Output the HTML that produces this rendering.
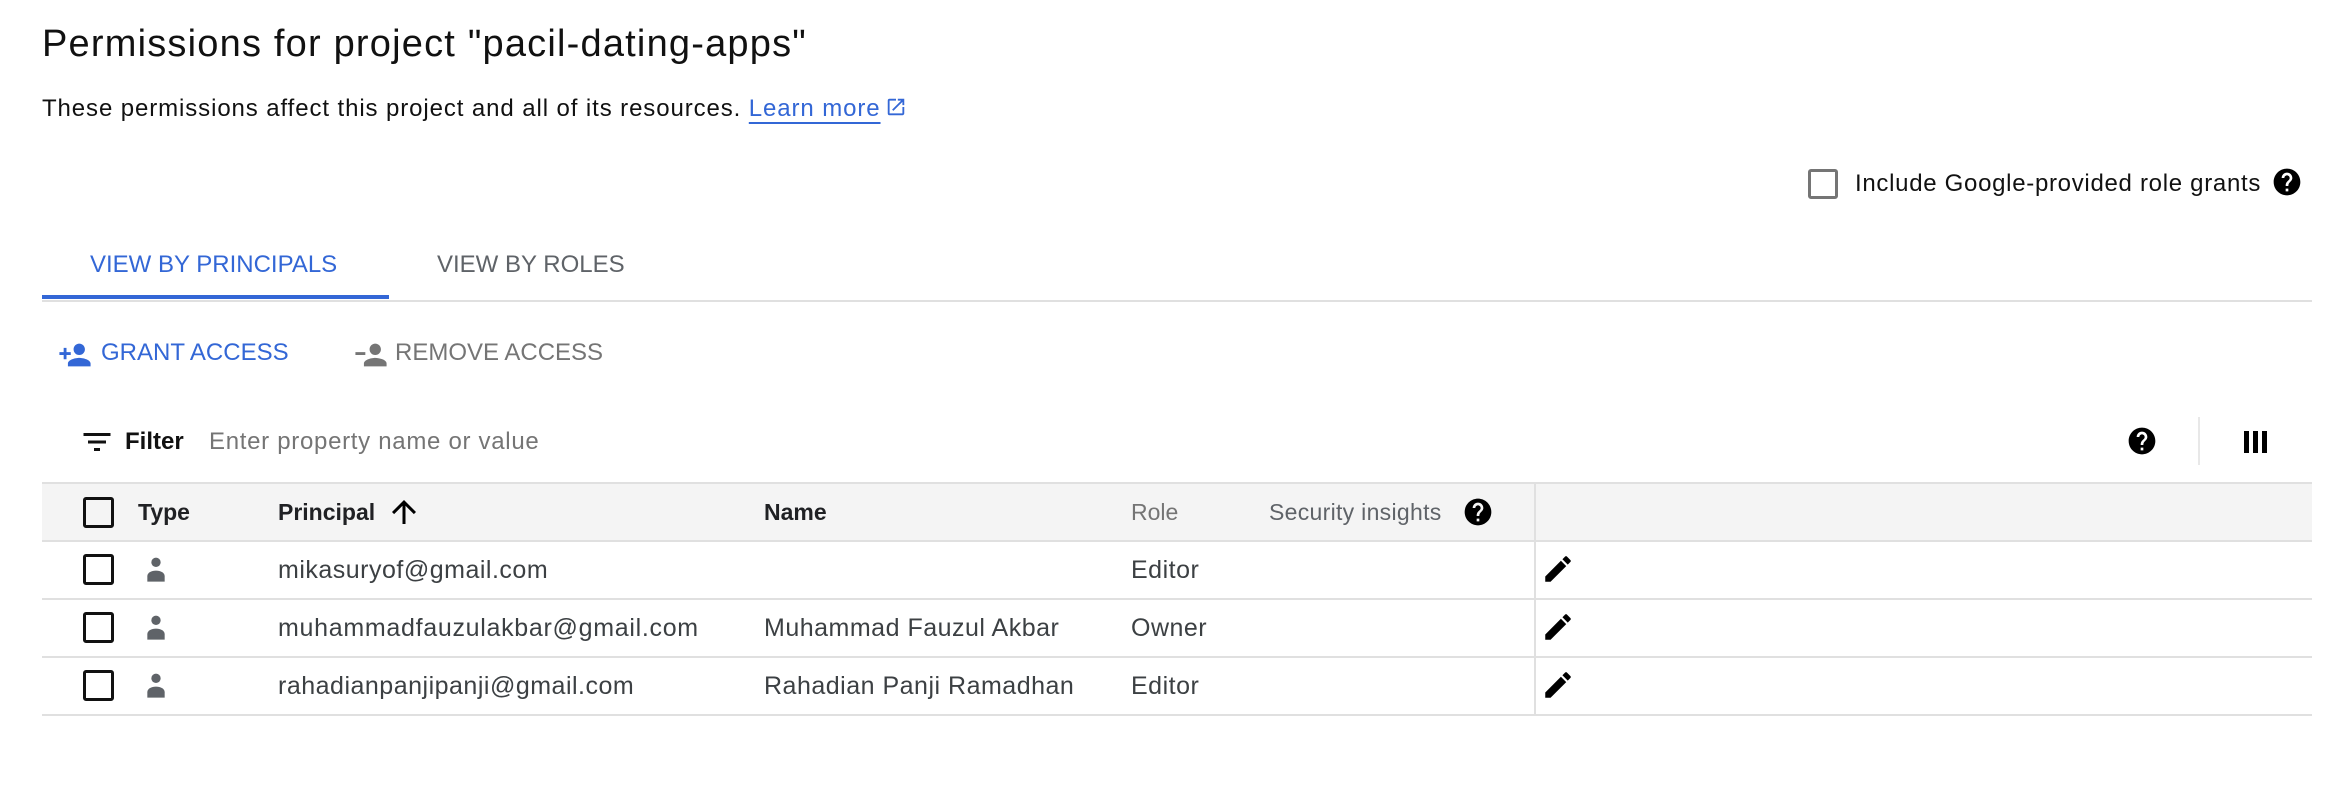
<!DOCTYPE html>
<html><head><meta charset="utf-8"><style>
*{margin:0;padding:0;box-sizing:border-box}
body{width:2350px;height:792px;background:#fff;font-family:"Liberation Sans",Arial,sans-serif;color:#202124;position:relative;overflow:hidden}
.a{position:absolute;white-space:nowrap}
svg{position:absolute;display:block}
.cb{position:absolute;width:31px;height:31px;border:3.5px solid #111;border-radius:3px}
.hl{position:absolute;left:42px;width:2270px;height:2px;background:#e0e0e0}
.hd{font-size:23px;font-weight:bold;line-height:30px}
.rt{font-size:25px;letter-spacing:0.5px;color:#3c4043;line-height:30px}
</style></head><body>
<div class="a" style="left:42px;top:19px;font-size:38px;letter-spacing:1.2px;line-height:50px;color:#111">Permissions for project "pacil-dating-apps"</div>
<div class="a" style="left:42px;top:94px;font-size:24px;letter-spacing:0.9px;line-height:30px;color:#111">These permissions affect this project and all of its resources. <span style="color:#3367d6;text-decoration:underline;text-underline-offset:6px;text-decoration-thickness:2px">Learn more</span><svg style="position:relative;display:inline-block;vertical-align:-2px;margin-left:4px" width="22" height="22" viewBox="0 0 24 24"><path fill="#3367d6" d="M19 19H5V5h7V3H5a2 2 0 0 0-2 2v14a2 2 0 0 0 2 2h14c1.1 0 2-.9 2-2v-7h-2v7zM14 3v2h3.59l-9.830 9.83 1.41 1.41L19 6.41V10h2V3h-7z"/></svg></div>

<div style="position:absolute;left:1808px;top:169px;width:30px;height:30px;border:3px solid #757575;border-radius:3px"></div>
<div class="a" style="left:1855px;top:169px;font-size:24px;letter-spacing:0.7px;line-height:30px;color:#111">Include Google-provided role grants</div>
<svg style="left:2271px;top:166px" width="32" height="32" viewBox="0 0 24 24"><path fill="#000" d="M12 2C6.48 2 2 6.48 2 12s4.48 10 10 10 10-4.48 10-10S17.52 2 12 2zm1 17h-2v-2h2v2zm2.07-7.75l-.9.92C13.45 12.9 13 13.5 13 15h-2v-.5c0-1.1.45-2.1 1.17-2.83l1.24-1.26c.37-.36.59-.86.59-1.41 0-1.1-.9-2-2-2s-2 .9-2 2H8c0-2.21 1.79-4 4-4s4 1.79 4 4c0 .88-.36 1.68-.93 2.25z"/></svg>

<div class="a" style="left:90px;top:250px;font-size:24px;line-height:30px;color:#3367d6">VIEW BY PRINCIPALS</div>
<div class="a" style="left:437px;top:250px;font-size:24px;line-height:30px;color:#5f6368">VIEW BY ROLES</div>
<div style="position:absolute;left:42px;top:300px;width:2270px;height:2px;background:#e0e0e0"></div>
<div style="position:absolute;left:42px;top:295px;width:347px;height:4px;background:#3367d6"></div>

<svg style="left:58px;top:338px" width="34" height="34" viewBox="0 0 24 24"><path fill="#3367d6" d="M15 12c2.21 0 4-1.79 4-4s-1.79-4-4-4-4 1.79-4 4 1.79 4 4 4zm-9-2V7H4v3H1v2h3v3h2v-3h3v-2H6zm9 4c-2.67 0-8 1.34-8 4v2h16v-2c0-2.66-5.33-4-8-4z"/></svg>
<div class="a" style="left:101px;top:338px;font-size:24px;line-height:30px;color:#3367d6">GRANT ACCESS</div>
<svg style="left:354px;top:338px" width="34" height="34" viewBox="0 0 24 24"><path fill="#757575" d="M15 12c2.21 0 4-1.79 4-4s-1.79-4-4-4-4 1.79-4 4 1.79 4 4 4zM1 10h7v2H1zm14 4c-2.67 0-8 1.34-8 4v2h16v-2c0-2.66-5.33-4-8-4z"/></svg>
<div class="a" style="left:395px;top:338px;font-size:24px;line-height:30px;color:#757575">REMOVE ACCESS</div>

<svg style="left:79px;top:424px" width="36" height="36" viewBox="0 0 24 24"><path fill="#111" d="M10 18h4v-2h-4v2zM3 6v2h18V6H3zm3 7h12v-2H6v2z"/></svg>
<div class="a" style="left:125px;top:427px;font-size:24px;line-height:30px;font-weight:bold;color:#111">Filter</div>
<div class="a" style="left:209px;top:427px;font-size:24px;letter-spacing:0.7px;line-height:30px;color:#757575">Enter property name or value</div>
<svg style="left:2126px;top:425px" width="32" height="32" viewBox="0 0 24 24"><path fill="#000" d="M12 2C6.48 2 2 6.48 2 12s4.48 10 10 10 10-4.48 10-10S17.52 2 12 2zm1 17h-2v-2h2v2zm2.07-7.75l-.9.92C13.45 12.9 13 13.5 13 15h-2v-.5c0-1.1.45-2.1 1.17-2.83l1.24-1.26c.37-.36.59-.86.59-1.41 0-1.1-.9-2-2-2s-2 .9-2 2H8c0-2.21 1.79-4 4-4s4 1.79 4 4c0 .88-.36 1.68-.93 2.25z"/></svg>
<div style="position:absolute;left:2198px;top:417px;width:2px;height:48px;background:#e8e8e8"></div>
<div style="position:absolute;left:2244px;top:431px;width:5px;height:22px;background:#000"></div>
<div style="position:absolute;left:2253px;top:431px;width:5px;height:22px;background:#000"></div>
<div style="position:absolute;left:2262px;top:431px;width:5px;height:22px;background:#000"></div>

<div style="position:absolute;left:42px;top:483px;width:2270px;height:58px;background:#f4f4f4"></div>
<div class="hl" style="top:482px"></div>
<div class="hl" style="top:540px"></div>
<div class="hl" style="top:598px"></div>
<div class="hl" style="top:656px"></div>
<div class="hl" style="top:714px"></div>
<div style="position:absolute;left:1534px;top:483px;width:2px;height:232px;background:#e0e0e0"></div>

<div class="cb" style="left:83px;top:497px"></div>
<div class="a hd" style="left:138px;top:497px">Type</div>
<div class="a hd" style="left:278px;top:497px">Principal</div>
<svg style="left:386px;top:494px" width="36" height="36" viewBox="0 0 24 24"><path fill="#000" d="M4 12l1.41 1.41L11 7.83V20h2V7.83l5.58 5.59L20 12l-8-8-8 8z"/></svg>
<div class="a hd" style="left:764px;top:497px">Name</div>
<div class="a" style="left:1131px;top:497px;font-size:23px;line-height:30px;color:#757575">Role</div>
<div class="a" style="left:1269px;top:497px;font-size:23px;letter-spacing:0.3px;line-height:30px;color:#5f6368">Security insights</div>
<svg style="left:1462px;top:496px" width="32" height="32" viewBox="0 0 24 24"><path fill="#000" d="M12 2C6.48 2 2 6.48 2 12s4.48 10 10 10 10-4.48 10-10S17.52 2 12 2zm1 17h-2v-2h2v2zm2.07-7.75l-.9.92C13.45 12.9 13 13.5 13 15h-2v-.5c0-1.1.45-2.1 1.17-2.83l1.24-1.26c.37-.36.59-.86.59-1.41 0-1.1-.9-2-2-2s-2 .9-2 2H8c0-2.21 1.79-4 4-4s4 1.79 4 4c0 .88-.36 1.68-.93 2.25z"/></svg>

<div class="cb" style="left:83px;top:554px"></div>
<svg style="left:136px;top:550px" width="40" height="40" viewBox="0 0 24 24"><circle cx="12" cy="7.4" r="2.8" fill="#5f6368"/><path fill="#5f6368" d="M12 12.4c-2.8 0-5.2 1.3-5.2 3.3V19h10.4v-3.3c0-2-2.4-3.3-5.2-3.3z"/></svg>
<div class="a rt" style="left:278px;top:555px">mikasuryof@gmail.com</div>
<div class="a rt" style="left:1131px;top:555px">Editor</div>
<svg style="left:1541px;top:552px" width="34" height="34" viewBox="0 0 24 24"><path fill="#000" d="M3 17.25V21h3.75L17.81 9.94l-3.75-3.75L3 17.25zM20.71 7.04a1 1 0 0 0 0-1.41l-2.34-2.34a1 1 0 0 0-1.41 0l-1.83 1.83 3.75 3.75 1.83-1.83z"/></svg>

<div class="cb" style="left:83px;top:612px"></div>
<svg style="left:136px;top:608px" width="40" height="40" viewBox="0 0 24 24"><circle cx="12" cy="7.4" r="2.8" fill="#5f6368"/><path fill="#5f6368" d="M12 12.4c-2.8 0-5.2 1.3-5.2 3.3V19h10.4v-3.3c0-2-2.4-3.3-5.2-3.3z"/></svg>
<div class="a rt" style="left:278px;top:613px;letter-spacing:0.7px">muhammadfauzulakbar@gmail.com</div>
<div class="a rt" style="left:764px;top:613px">Muhammad Fauzul Akbar</div>
<div class="a rt" style="left:1131px;top:613px">Owner</div>
<svg style="left:1541px;top:610px" width="34" height="34" viewBox="0 0 24 24"><path fill="#000" d="M3 17.25V21h3.75L17.81 9.94l-3.75-3.75L3 17.25zM20.71 7.04a1 1 0 0 0 0-1.41l-2.34-2.34a1 1 0 0 0-1.41 0l-1.83 1.83 3.75 3.75 1.83-1.83z"/></svg>

<div class="cb" style="left:83px;top:670px"></div>
<svg style="left:136px;top:666px" width="40" height="40" viewBox="0 0 24 24"><circle cx="12" cy="7.4" r="2.8" fill="#5f6368"/><path fill="#5f6368" d="M12 12.4c-2.8 0-5.2 1.3-5.2 3.3V19h10.4v-3.3c0-2-2.4-3.3-5.2-3.3z"/></svg>
<div class="a rt" style="left:278px;top:671px">rahadianpanjipanji@gmail.com</div>
<div class="a rt" style="left:764px;top:671px">Rahadian Panji Ramadhan</div>
<div class="a rt" style="left:1131px;top:671px">Editor</div>
<svg style="left:1541px;top:668px" width="34" height="34" viewBox="0 0 24 24"><path fill="#000" d="M3 17.25V21h3.75L17.81 9.94l-3.75-3.75L3 17.25zM20.71 7.04a1 1 0 0 0 0-1.41l-2.34-2.34a1 1 0 0 0-1.41 0l-1.83 1.83 3.75 3.75 1.83-1.83z"/></svg>
</body></html>
